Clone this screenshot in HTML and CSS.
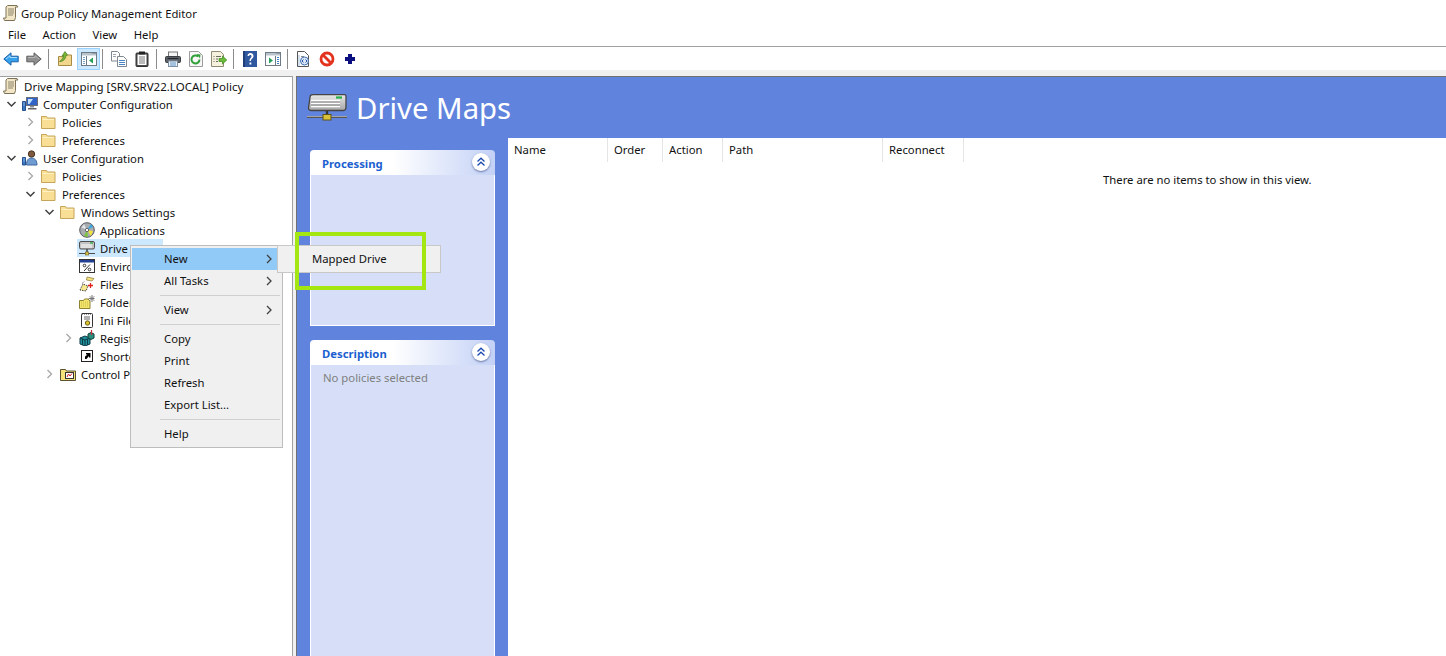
FILE: index.html
```html
<!DOCTYPE html>
<html lang="en">
<head>
    <meta charset="UTF-8">
    <meta name="viewport" content="width=device-width, initial-scale=1.0">
    <title>Group Policy Management Editor</title>

    <link rel="stylesheet" href="styles.css">
</head>
<body>

<svg class="sprites" width="0" height="0">
    <symbol id="i-scroll" viewBox="0 0 16 16">
        <path d="M4.500.500h9.500l1 1.500h-2.500v10.500l-1 3H1.500l-1-2.500h2.500V2z" fill="#f2e6c6" stroke="#7d7257"/>
        <path d="M5 4h6M5 6h6M5 8h6M5 10h5" stroke="#8b8269"/>
    </symbol>
    <symbol id="i-folder" viewBox="0 0 16 16">
        <path d="M.5 14.500V2.500h5l1 1.500h7.500v10.500z" fill="#f9df95" stroke="#c4a55a"/>
        <path d="M1.500 5.500h11.500" stroke="#fff1c4"/>
    </symbol>
    <symbol id="i-computer" viewBox="0 0 16 16">
        <rect x="4.500" y="1.500" width="11" height="8" fill="#2f63c8" stroke="#6c6f78"/>
        <path d="M6 3h5l-3.500 5H6z" fill="#c5e0f9"/>
        <path d="M8 10h4v1.500H8z" fill="#8a8d94"/>
        <path d="M6 12h8.500v1.500H6z" fill="#666"/>
        <path d="M.5 5.500h3v9h-3z" fill="#3b78c4" stroke="#28518f"/>
        <path d="M1.500 7h1M1.500 9h1" stroke="#d6e7f8"/>
    </symbol>
    <symbol id="i-user" viewBox="0 0 16 16">
        <circle cx="9.500" cy="4" r="3.200" fill="#7d5a3e" stroke="#4c3423"/>
        <path d="M4.500 15c0-5 2-7 5-7s5.500 2 5.500 7z" fill="#6f9bd3" stroke="#40689f"/>
        <path d="M.5 7.500h3v7.500h-3z" fill="#3b78c4" stroke="#28518f"/>
        <path d="M1.500 9h1M1.500 11h1" stroke="#d6e7f8"/>
    </symbol>
    <symbol id="i-cd" viewBox="0 0 16 16">
        <circle cx="8" cy="8" r="7.300" fill="#a9acb0" stroke="#55585c"/>
        <path d="M5 2l3 6-5.500-2.500z" fill="#e0e2e4"/>
        <path d="M8 8l-3 6 4 1z" fill="#7cc63f"/>
        <path d="M8 8l4-6 2 3z" fill="#3ba7e0"/>
        <path d="M8 8l6 1-2 5z" fill="#f2e23c"/>
        <circle cx="8" cy="8" r="1.700" fill="#fff" stroke="#666"/>
    </symbol>
    <symbol id="i-drive" viewBox="0 0 16 16">
        <rect x=".5" y="1.500" width="15" height="7.500" rx="1.500" fill="#c4c4c4" stroke="#4d4d4d"/>
        <path d="M2 5h11M2 7h11" stroke="#fff"/>
        <path d="M11 3h3" stroke="#36b04a" stroke-width="1.400"/>
        <path d="M8 9v3" stroke="#444" stroke-width="1.500"/>
        <path d="M0 13.500h16" stroke="#4d4d4d"/>
        <rect x="6.300" y="12" width="3.400" height="3" fill="#d7c24b" stroke="#6e6224" stroke-width=".6"/>
    </symbol>
    <symbol id="i-drive-big" viewBox="0 0 40 27">
        <defs>
            <linearGradient id="drive-face" x1="0" y1="0" x2="0" y2="1">
                <stop offset="0" stop-color="#e8e8e8"/>
                <stop offset="1" stop-color="#a6a6a6"/>
            </linearGradient>
        </defs>
        <path d="M3 3.500C3 1.500 4 .7 6 .7h31.500c.8 0 1.500.7 1.500 1.500V13c0 2-1 3.500-3 3.500H4.500C2.500 16.500 1.500 15.500 1.500 14z" fill="url(#drive-face)" stroke="#444" stroke-width="1.300"/>
        <path d="M4 6.500h29M4 9.500h29M4 12.500h29" stroke="#fff" stroke-width="1.400"/>
        <path d="M4 8h29M4 11h29" stroke="#777" stroke-width=".8"/>
        <path d="M29 3.500h6" stroke="#25b048" stroke-width="2.200"/>
        <path d="M20 17v5" stroke="#333" stroke-width="2.400"/>
        <path d="M0 23h40" stroke="#555" stroke-width="2"/>
        <path d="M0 22.500h40" stroke="#c9c9c9" stroke-width=".7"/>
        <rect x="16" y="20.500" width="8" height="5.500" fill="#d9c23a" stroke="#5e5218"/>
    </symbol>
    <symbol id="i-env" viewBox="0 0 16 16">
        <rect x=".5" y="1.500" width="15" height="13" fill="#fff" stroke="#333"/>
        <path d="M1 2h14v2.500H1z" fill="#233f94"/>
        <circle cx="5.500" cy="7.500" r="1.300" fill="none" stroke="#333"/>
        <circle cx="10.500" cy="11.500" r="1.300" fill="none" stroke="#333"/>
        <path d="M11 6.500l-6 6.500" stroke="#333"/>
    </symbol>
    <symbol id="i-files" viewBox="0 0 16 16">
        <path d="M8 1l7 1.500-2 2.500-5.500-1z" fill="#f6e27a" stroke="#85763a" stroke-width=".7"/>
        <path d="M1 14l3-6 5 2-2 5z" fill="#f7e98f" stroke="#444" stroke-dasharray="1.500 1"/>
        <path d="M3 7.500l3-2.500" stroke="#555" stroke-dasharray="1 1"/>
        <path d="M9 9.500h5M11.500 7v5" stroke="#e0221f" stroke-width="1.300"/>
    </symbol>
    <symbol id="i-folders" viewBox="0 0 16 16">
        <path d="M.5 14.500V6.500h4l1-1.500h3.500l2 2v7.500z" fill="#f3e56d" stroke="#8d8330"/>
        <path d="M2 8h7M2 10h8M2 12h8" stroke="#c7b93e" stroke-dasharray="1 1"/>
        <path d="M13 1v7M9.500 4.500h6M10.800 2.300l4.400 4.400M15.200 2.300l-4.400 4.400" stroke="#777"/>
    </symbol>
    <symbol id="i-ini" viewBox="0 0 16 16">
        <rect x="2.500" y="1.500" width="11" height="14" rx="1" fill="#fff" stroke="#333"/>
        <path d="M3.500 1v1.500M5.500 1v1.500M7.500 1v1.500M9.500 1v1.500M11.500 1v1.500" stroke="#333"/>
        <path d="M5 5h6M5 7h6" stroke="#666"/>
        <circle cx="8.500" cy="11" r="2.200" fill="#d9c22f" stroke="#6e6218"/>
    </symbol>
    <symbol id="i-reg" viewBox="0 0 16 16">
        <path d="M1 8l5-2 5 2v6l-5 2-5-2z" fill="#1f8f9a" stroke="#0f3b48"/>
        <path d="M1 8l5 2 5-2M6 10v6M3.500 9v6M8.500 9v6" stroke="#0f3b48" fill="none"/>
        <path d="M9 4l3-1.500 3 1.500v4l-3 1.500-3-1.500z" fill="#2b8f7e" stroke="#103d3a"/>
        <path d="M12.500 0v5" stroke="#d12b3a" stroke-width="1.200"/>
    </symbol>
    <symbol id="i-shortcut" viewBox="0 0 16 16">
        <rect x="2.500" y="2.500" width="11" height="11" fill="#fff" stroke="#222"/>
        <path d="M6 11V8.500L8.500 6.500H7V5h4.500v4.500H10V8L7.500 11z" fill="#000"/>
    </symbol>
    <symbol id="i-panel" viewBox="0 0 16 16">
        <path d="M.5 14.500v-11h5l1 1.500h9v9.500z" fill="#f5e27a" stroke="#5a5230"/>
        <rect x="5.500" y="6.500" width="8" height="6" fill="#fff" stroke="#333"/>
        <path d="M7 11l1.500-3 1.500 2 2-2.500" stroke="#c22" fill="none"/>
    </symbol>
    <symbol id="i-back" viewBox="0 0 16 16">
        <path d="M.8 8L8 1.800v3.400h7.200v5.600H8v3.400z" fill="#35a1ea" stroke="#1d5ea8"/>
        <path d="M3 8l4-3.300v1.800h7" stroke="#a9dcfb" fill="none"/>
    </symbol>
    <symbol id="i-forward" viewBox="0 0 16 16">
        <path d="M15.200 8L8 1.800v3.400H.8v5.600H8v3.400z" fill="#8e8e8e" stroke="#5e5e5e"/>
        <path d="M13 8L9 4.700v1.800H2" stroke="#b8b8b8" fill="none"/>
    </symbol>
    <symbol id="i-up" viewBox="0 0 16 16">
        <path d="M1.500 14.500V5.500h5l1-1.500h7v10.500z" fill="#f2d88f" stroke="#a88c44"/>
        <path d="M2.500 10.500C5 9 6 7 6.500 4.500L5 5 8 .5l2.500 3.500-1.500.5C8.500 8 6.500 10.500 2.500 10.500z" fill="#7ab536" stroke="#437f1c" stroke-width=".7"/>
    </symbol>
    <symbol id="i-tree" viewBox="0 0 16 16">
        <rect x=".5" y="1.500" width="15" height="13" fill="#fff" stroke="#6e7a85"/>
        <path d="M1 2h14v2.500H1z" fill="#b9c3cc"/>
        <path d="M11.500 2.500h1M13.500 2.500h1M5.500 5v9" stroke="#6e7a85"/>
        <path d="M2 6.500h2M2 8.500h2M2 10.500h2M2 12.500h2" stroke="#7aa3c9"/>
        <path d="M12 6.500v6L8 9.500z" fill="#27a05a"/>
    </symbol>
    <symbol id="i-action" viewBox="0 0 16 16">
        <rect x=".5" y="1.500" width="15" height="13" fill="#fff" stroke="#6e7a85"/>
        <path d="M1 2h14v2.500H1z" fill="#b9c3cc"/>
        <path d="M11.500 2.500h1M13.500 2.500h1M10.500 5v9" stroke="#6e7a85"/>
        <path d="M12 6.500h2M12 8.500h2M12 10.500h2M12 12.500h2" stroke="#3f7fc4"/>
        <path d="M4 6.500v6L8 9.500z" fill="#27a05a"/>
    </symbol>
    <symbol id="i-copy" viewBox="0 0 16 16">
        <path d="M.5.500h6l2 2v7.500h-8z" fill="#fff" stroke="#7f8790"/>
        <path d="M6.500 5.500h6l3 3v7h-9z" fill="#fff" stroke="#7f8790"/>
        <path d="M8 9.500h6M8 11.500h6M8 13.500h6" stroke="#4a86c5"/>
        <path d="M2 3.500h3M2 5.500h3" stroke="#9aa2ab"/>
    </symbol>
    <symbol id="i-paste" viewBox="0 0 16 16">
        <rect x="2" y="2" width="12" height="13.500" rx="1" fill="#4a4a4a" stroke="#333"/>
        <rect x="3.500" y="3.500" width="9" height="10.500" fill="#fff"/>
        <rect x="5" y=".5" width="6" height="3" fill="#222"/>
        <path d="M5 6h6M5 8h6M5 10h6M5 12h6" stroke="#777"/>
    </symbol>
    <symbol id="i-print" viewBox="0 0 16 16">
        <rect x="3.500" y="1" width="9" height="4.500" fill="#f4f4f4" stroke="#777"/>
        <rect x=".5" y="5.500" width="15" height="6" rx="1" fill="#5b6066" stroke="#3b3e42"/>
        <path d="M2.500 7.500h11" stroke="#23262a"/>
        <rect x="3.500" y="10" width="9" height="5.500" fill="#eef3f9" stroke="#7c8ea3"/>
        <path d="M5 12h6M5 14h6" stroke="#5b93c9"/>
    </symbol>
    <symbol id="i-refresh" viewBox="0 0 16 16">
        <path d="M1.500.500h9l4 4v11h-13z" fill="#f7f7f7" stroke="#9c9c9c"/>
        <path d="M11.500 8.500a4 4 0 1 1-1.300-3" fill="none" stroke="#2fa03a" stroke-width="2"/>
        <path d="M8.500 3l4 .5-.5 4z" fill="#2fa03a"/>
    </symbol>
    <symbol id="i-export" viewBox="0 0 16 16">
        <path d="M.5.500h9l3 3v12H.5z" fill="#f6f1de" stroke="#8f8a72"/>
        <path d="M2.500 5.500h1M2.500 8h1M2.500 10.500h1M5 5.500h5M5 8h2M5 10.500h2" stroke="#6b6b60"/>
        <path d="M8 7.500h3.500V5l4.300 4-4.300 4v-2.500H8z" fill="#69bb39" stroke="#3e8a20" stroke-width=".7"/>
    </symbol>
    <symbol id="i-help" viewBox="0 0 16 16">
        <rect x="1" y="0" width="14" height="16" fill="#30589f"/>
        <path d="M1 0h2v16H1z" fill="#1f3d78"/>
        <path d="M5.500 5c0-4 6-4 6 0 0 2.500-2.500 2.500-2.500 5h-1.500c0-3 2-3 2-5 0-1.500-2.500-1.500-2.500 0z" fill="#fff"/>
        <rect x="7.500" y="11.500" width="1.800" height="2" fill="#fff"/>
    </symbol>
    <symbol id="i-doc" viewBox="0 0 16 16">
        <path d="M1.500.500h7l4 4v11h-11z" fill="#fff" stroke="#555"/>
        <path d="M3 15V4" stroke="#aac4e4"/>
        <path d="M5 5.500h3" stroke="#8a8a8a"/>
        <circle cx="8.500" cy="10" r="4" fill="#dce9f7" stroke="#3e6fb3"/>
        <path d="M7.500 8.500L6 10l1.500 1.500M9.500 8.500L11 10l-1.500 1.500" stroke="#2552a5" fill="none"/>
    </symbol>
    <symbol id="i-stop" viewBox="0 0 16 16">
        <circle cx="8" cy="8" r="6" fill="#fff" stroke="#e3331f" stroke-width="2.800"/>
        <path d="M3.800 3.800l8.400 8.400" stroke="#e3331f" stroke-width="2.800"/>
    </symbol>
    <symbol id="i-plus" viewBox="0 0 16 16">
        <path d="M6 3h4v3h3v4h-3v3H6v-3H3V6h3z" fill="#0c0f80"/>
    </symbol>
    <symbol id="i-right" viewBox="0 0 8 10">
        <path d="M2 1l4 4-4 4" fill="none" stroke="currentColor" stroke-width="1.300"/>
    </symbol>
    <symbol id="i-down" viewBox="0 0 10 8">
        <path d="M1 2l4 4 4-4" fill="none" stroke="currentColor" stroke-width="1.500"/>
    </symbol>
    <symbol id="i-collapse" viewBox="0 0 10 10">
        <path d="M1.500 4.500L5 1.200l3.500 3.300M1.500 8.500L5 5.200l3.500 3.300" fill="none" stroke="#1c4bb0" stroke-width="1.300"/>
    </symbol>
</svg>

<div class="app">
    <div class="titlebar">
        <svg class="icon"><use href="#i-scroll"/></svg>
        <span>Group Policy Management Editor</span>
    </div>

    <nav class="menubar">
        <span>File</span>
        <span>Action</span>
        <span>View</span>
        <span>Help</span>
    </nav>

    <div class="toolbar">
        <button class="tool"><svg class="icon"><use href="#i-back"/></svg></button>
        <button class="tool"><svg class="icon"><use href="#i-forward"/></svg></button>
        <span class="tool-sep"></span>
        <button class="tool"><svg class="icon"><use href="#i-up"/></svg></button>
        <button class="tool tool-on"><svg class="icon"><use href="#i-tree"/></svg></button>
        <span class="tool-sep"></span>
        <button class="tool"><svg class="icon"><use href="#i-copy"/></svg></button>
        <button class="tool"><svg class="icon"><use href="#i-paste"/></svg></button>
        <span class="tool-sep"></span>
        <button class="tool"><svg class="icon"><use href="#i-print"/></svg></button>
        <button class="tool"><svg class="icon"><use href="#i-refresh"/></svg></button>
        <button class="tool"><svg class="icon"><use href="#i-export"/></svg></button>
        <span class="tool-sep"></span>
        <button class="tool"><svg class="icon"><use href="#i-help"/></svg></button>
        <button class="tool"><svg class="icon"><use href="#i-action"/></svg></button>
        <span class="tool-sep"></span>
        <button class="tool"><svg class="icon"><use href="#i-doc"/></svg></button>
        <button class="tool"><svg class="icon"><use href="#i-stop"/></svg></button>
        <button class="tool"><svg class="icon"><use href="#i-plus"/></svg></button>
    </div>

    <div class="strip"></div>

    <main class="workspace">
        <aside class="tree">
            <div class="row lvl-root">
                <span class="item"><svg class="icon"><use href="#i-scroll"/></svg><span>Drive Mapping [SRV.SRV22.LOCAL] Policy</span></span>
            </div>
            <div class="row lvl-0">
                <svg class="twist open"><use href="#i-down"/></svg>
                <span class="item"><svg class="icon"><use href="#i-computer"/></svg><span>Computer Configuration</span></span>
            </div>
            <div class="row lvl-1">
                <svg class="twist"><use href="#i-right"/></svg>
                <span class="item"><svg class="icon"><use href="#i-folder"/></svg><span>Policies</span></span>
            </div>
            <div class="row lvl-1">
                <svg class="twist"><use href="#i-right"/></svg>
                <span class="item"><svg class="icon"><use href="#i-folder"/></svg><span>Preferences</span></span>
            </div>
            <div class="row lvl-0">
                <svg class="twist open"><use href="#i-down"/></svg>
                <span class="item"><svg class="icon"><use href="#i-user"/></svg><span>User Configuration</span></span>
            </div>
            <div class="row lvl-1">
                <svg class="twist"><use href="#i-right"/></svg>
                <span class="item"><svg class="icon"><use href="#i-folder"/></svg><span>Policies</span></span>
            </div>
            <div class="row lvl-1">
                <svg class="twist open"><use href="#i-down"/></svg>
                <span class="item"><svg class="icon"><use href="#i-folder"/></svg><span>Preferences</span></span>
            </div>
            <div class="row lvl-2">
                <svg class="twist open"><use href="#i-down"/></svg>
                <span class="item"><svg class="icon"><use href="#i-folder"/></svg><span>Windows Settings</span></span>
            </div>
            <div class="row lvl-3">
                <span class="twist"></span>
                <span class="item"><svg class="icon"><use href="#i-cd"/></svg><span>Applications</span></span>
            </div>
            <div class="row lvl-3">
                <span class="twist"></span>
                <span class="item item-selected"><svg class="icon"><use href="#i-drive"/></svg><span>Drive Maps</span></span>
            </div>
            <div class="row lvl-3">
                <span class="twist"></span>
                <span class="item"><svg class="icon"><use href="#i-env"/></svg><span>Environment</span></span>
            </div>
            <div class="row lvl-3">
                <span class="twist"></span>
                <span class="item"><svg class="icon"><use href="#i-files"/></svg><span>Files</span></span>
            </div>
            <div class="row lvl-3">
                <span class="twist"></span>
                <span class="item"><svg class="icon"><use href="#i-folders"/></svg><span>Folders</span></span>
            </div>
            <div class="row lvl-3">
                <span class="twist"></span>
                <span class="item"><svg class="icon"><use href="#i-ini"/></svg><span>Ini Files</span></span>
            </div>
            <div class="row lvl-3">
                <svg class="twist"><use href="#i-right"/></svg>
                <span class="item"><svg class="icon"><use href="#i-reg"/></svg><span>Registry</span></span>
            </div>
            <div class="row lvl-3">
                <span class="twist"></span>
                <span class="item"><svg class="icon"><use href="#i-shortcut"/></svg><span>Shortcuts</span></span>
            </div>
            <div class="row lvl-2">
                <svg class="twist"><use href="#i-right"/></svg>
                <span class="item"><svg class="icon"><use href="#i-panel"/></svg><span>Control Panel Settings</span></span>
            </div>
        </aside>

        <section class="pane">
            <header class="pane-head">
                <svg class="pane-icon"><use href="#i-drive-big"/></svg>
                <h1>Drive Maps</h1>
            </header>

            <div class="pane-body">
                <div class="tasks">
                    <div class="card card-processing">
                        <div class="card-head">
                            <span>Processing</span>
                            <span class="collapse"><svg><use href="#i-collapse"/></svg></span>
                        </div>
                        <div class="card-body"></div>
                    </div>
                    <div class="card card-description">
                        <div class="card-head">
                            <span>Description</span>
                            <span class="collapse"><svg><use href="#i-collapse"/></svg></span>
                        </div>
                        <div class="card-body">No policies selected</div>
                    </div>
                </div>

                <div class="list">
                    <div class="list-head">
                        <span class="col col-name">Name</span>
                        <span class="col col-order">Order</span>
                        <span class="col col-action">Action</span>
                        <span class="col col-path">Path</span>
                        <span class="col col-reconnect">Reconnect</span>
                    </div>
                    <p class="list-empty">There are no items to show in this view.</p>
                </div>
            </div>
        </section>
    </main>

    <!-- menu de contexto aberto sobre Drive Maps -->
    <div class="menu">
        <div class="menu-item menu-item-on">New<svg class="menu-arrow"><use href="#i-right"/></svg></div>
        <div class="menu-item">All Tasks<svg class="menu-arrow"><use href="#i-right"/></svg></div>
        <div class="menu-sep"></div>
        <div class="menu-item">View<svg class="menu-arrow"><use href="#i-right"/></svg></div>
        <div class="menu-sep"></div>
        <div class="menu-item">Copy</div>
        <div class="menu-item">Print</div>
        <div class="menu-item">Refresh</div>
        <div class="menu-item">Export List...</div>
        <div class="menu-sep"></div>
        <div class="menu-item">Help</div>
    </div>

    <div class="submenu">Mapped Drive</div>
    <div class="callout"></div>
</div>

</body>
</html>
```

FILE: styles.css
```css
*{
    box-sizing: border-box;
}

body{
    margin: 0;
    padding: 0;
    font-family: "Noto Sans", "Open Sans", sans-serif;
    font-size: 11.3px;
    color: #111;
    background-color: white;
    overflow: hidden;
}

.sprites{
    position: absolute;
}

.icon{
    width: 16px;
    height: 16px;
    flex-shrink: 0;
    display: block;
}

.app{
    position: relative;
    width: 100%;
    height: 656px;
    display: flex;
    flex-direction: column;
    overflow: hidden;
}

.titlebar{
    height: 24px;
    padding: 2px 0 0 3px;
    display: flex;
    align-items: center;
    gap: 2px;
}

.menubar{
    height: 23px;
    padding: 0 0 1px 8px;
    display: flex;
    align-items: center;
    gap: 16.5px;
    border-bottom: 1px solid #a0a0a0;
}

.toolbar{
    height: 23px;
    display: flex;
    align-items: center;
}

.tool{
    width: 23px;
    height: 22px;
    padding: 0 2px 0 0;
    border: 1px solid transparent;
    background: none;
    display: flex;
    align-items: center;
    justify-content: center;
}

.tool-on{
    background-color: #cce8ff;
    border-color: #99d1ff;
    padding-right: 0;
}

.tool-sep{
    width: 1px;
    height: 20px;
    margin: 0 5px 0 2px;
    background-color: #8c8c8c;
}

.strip{
    height: 6px;
    background-color: #f0f0f0;
}

.workspace{
    flex: 1;
    display: flex;
    min-height: 0;
    background-color: #f0f0f0;
}

/* arvore da esquerda */
.tree{
    width: 293px;
    flex-shrink: 0;
    background-color: white;
    border-top: 1px solid #a0a0a0;
    border-right: 1px solid #a0a0a0;
}

.row{
    height: 18px;
    display: flex;
    align-items: center;
    white-space: nowrap;
}

.lvl-root{
    padding-left: 1px;
    font-size: 11.5px;
}

.lvl-0{
    padding-left: 3px;
}

.lvl-1{
    padding-left: 22px;
}

.lvl-2{
    padding-left: 41px;
}

.lvl-3{
    padding-left: 60px;
}

.twist{
    width: 17px;
    height: 10px;
    flex-shrink: 0;
    color: #a6a6a6;
}

.twist.open{
    height: 8px;
    color: #404040;
}

.item{
    height: 18px;
    padding: 0 3px 0 2px;
    display: flex;
    align-items: center;
    gap: 5px;
}

.item-selected{
    background-color: #cce8ff;
}

/* painel da direita */
.pane{
    flex: 1;
    margin-left: 3px;
    display: flex;
    flex-direction: column;
    min-width: 0;
    background-color: #6083dd;
    border-top: 1px solid #707070;
    border-left: 1px solid #707070;
}

.pane-head{
    height: 61px;
    padding-left: 10px;
    display: flex;
    align-items: center;
    gap: 9px;
}

.pane-icon{
    width: 40px;
    height: 27px;
}

.pane-head h1{
    margin: 0;
    font-size: 29.3px;
    font-weight: 400;
    color: white;
}

.pane-body{
    flex: 1;
    display: flex;
    min-height: 0;
}

.tasks{
    width: 211px;
    flex-shrink: 0;
    padding: 12px 13px 0;
    display: flex;
    flex-direction: column;
    gap: 14px;
}

.card{
    display: flex;
    flex-direction: column;
}

.card-processing{
    height: 176px;
}

.card-description{
    flex: 1;
    margin-bottom: -10px;
}

.card-head{
    height: 25px;
    padding: 1px 5px 0 12px;
    display: flex;
    align-items: center;
    justify-content: space-between;
    font-weight: 700;
    color: #1c5fd0;
    border-radius: 4px 4px 0 0;
    background: linear-gradient(90deg, white 45%, #c3d1f6);
}

.collapse{
    width: 18px;
    height: 18px;
    margin-top: -3px;
    display: flex;
    align-items: center;
    justify-content: center;
    border-radius: 50%;
    background-color: white;
    box-shadow: 0 1px 2px rgba(30, 50, 110, .6);
}

.collapse svg{
    width: 10px;
    height: 10px;
}

.card-body{
    flex: 1;
    padding: 5px 12px;
    color: #7f7f7f;
    background-color: #d6dff7;
    border: 1px solid white;
    border-top: none;
}

.list{
    flex: 1;
    min-width: 0;
    background-color: white;
}

.list-head{
    height: 24px;
    display: flex;
}

.col{
    padding: 0 0 2px 6px;
    display: flex;
    align-items: center;
    border-right: 1px solid #e5e5e5;
}

.col-name{
    width: 100px;
}

.col-order{
    width: 55px;
}

.col-action{
    width: 60px;
}

.col-path{
    width: 160px;
}

.col-reconnect{
    width: 81px;
}

.list-empty{
    margin: 10px 0 0 595px;
}

/* menus abertos por cima */
.menu{
    position: absolute;
    left: 130px;
    top: 245px;
    width: 153px;
    padding: 2px 2px 2px 1px;
    background-color: #f0f0f0;
    border: 1px solid #bdbdbd;
}

.menu-item{
    height: 22px;
    padding: 0 0 2px 32px;
    display: flex;
    align-items: center;
    position: relative;
}

.menu-item-on{
    background-color: #91c9f7;
}

.menu-arrow{
    position: absolute;
    left: 133px;
    top: 6px;
    width: 8px;
    height: 10px;
    color: #404040;
}

.menu-sep{
    height: 1px;
    margin: 3px 0 3px 28px;
    background-color: #cfcfcf;
}

.submenu{
    position: absolute;
    left: 277px;
    top: 245px;
    width: 164px;
    height: 28px;
    padding: 0 0 2px 34px;
    display: flex;
    align-items: center;
    background-color: #f0f0f0;
    border: 1px solid #c8c8c8;
}

.callout{
    position: absolute;
    left: 295px;
    top: 232px;
    width: 131px;
    height: 58px;
    border: 4px solid #a4e612;
}
```
